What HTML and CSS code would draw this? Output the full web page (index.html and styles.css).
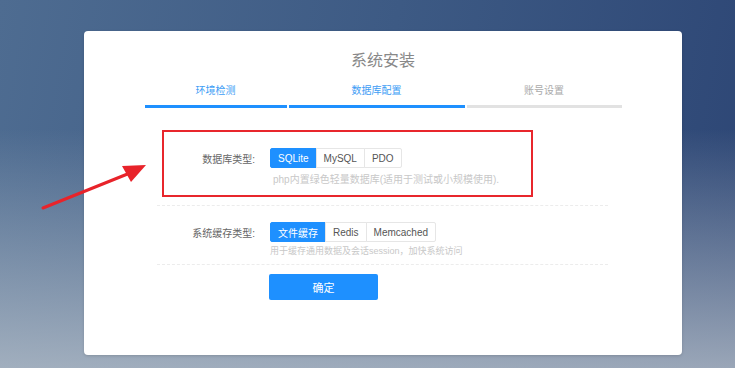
FILE: index.html
```html
<!DOCTYPE html>
<html>
<head>
    <meta charset="UTF-8">
    <title>系统安装</title>
    <link rel="stylesheet" href="styles.css">
</head>
<body>
    <!-- 标注箭头 -->
    <svg class="mark-arrow" width="160" height="60" viewBox="0 0 160 60">
        <line x1="43" y1="53" x2="130" y2="18" stroke="#e8232a" stroke-width="3" stroke-linecap="round"/>
        <polygon points="146,10 122,11 131,27" fill="#e8232a"/>
    </svg>

    <div class="card">
        <h1 class="title">系统安装</h1>

        <!-- 安装步骤 -->
        <div class="steps">
            <div class="step step-1 done">环境检测</div>
            <div class="step step-2 done">数据库配置</div>
            <div class="step step-3">账号设置</div>
        </div>

        <form class="form" onsubmit="return false">
            <div class="row row-db">
                <div class="mark-box"></div>
                <div class="line">
                    <label class="label">数据库类型:</label>
                    <div class="btn-group">
                        <button type="button" class="opt active">SQLite</button>
                        <button type="button" class="opt">MySQL</button>
                        <button type="button" class="opt">PDO</button>
                    </div>
                </div>
                <div class="help help-db">php内置绿色轻量数据库(适用于测试或小规模使用).</div>
            </div>

            <div class="row row-cache">
                <div class="line">
                    <label class="label">系统缓存类型:</label>
                    <div class="btn-group">
                        <button type="button" class="opt active">文件缓存</button>
                        <button type="button" class="opt">Redis</button>
                        <button type="button" class="opt">Memcached</button>
                    </div>
                </div>
                <div class="help help-cache">用于缓存通用数据及会话session，加快系统访问</div>
            </div>

            <div class="actions">
                <button type="submit" class="submit-btn">确定</button>
            </div>
        </form>
    </div>
</body>
</html>
```

FILE: styles.css
```css
/* 页面背景 */
body {
    margin: 0;
    height: 368px;
    overflow: hidden;
    font-family: "Liberation Sans", "Noto Sans CJK SC", sans-serif;
    background:
        linear-gradient(to bottom, rgba(190, 198, 206, 0) 35%, rgba(190, 198, 206, 0.75) 100%),
        linear-gradient(100deg, #4e6c91 0%, #3d5a84 50%, #2d4675 100%);
}

/* 白色卡片 */
.card {
    width: 598px;
    height: 324px;
    margin: 31px 0 0 84px;
    padding-top: 20px;
    box-sizing: border-box;
    background-color: #fff;
    border-radius: 4px;
    box-shadow: 0 1px 3px rgba(0, 0, 0, 0.15);
}

.title {
    margin: 0;
    font-size: 16px;
    line-height: 20px;
    font-weight: normal;
    color: #888;
    text-align: center;
}

/* 步骤条 */
.steps {
    display: flex;
    gap: 2px;
    width: 477px;
    margin: 13px auto 0;
}

.step {
    font-size: 10px;
    line-height: 14px;
    color: #aaa;
    text-align: center;
    padding-bottom: 7px;
    border-bottom: 3px solid #e2e2e2;
}

.step.done {
    color: #3d9df5;
    border-bottom-color: #1e90ff;
}

.step-1 { width: 142px; }
.step-2 { width: 176px; }
.step-3 { width: 155px; }

/* 表单 */
.form {
    margin: 24px 74px 0 73px;
}

.row {
    position: relative;
    padding-top: 16px;
    border-bottom: 1px dashed #ececec;
}

.row-db { padding-bottom: 18px; }
.row-cache { padding-bottom: 6px; }

.line {
    display: flex;
    align-items: center;
    gap: 15px;
}

.label {
    width: 98px;
    text-align: right;
    font-size: 10px;
    color: #666;
}

.btn-group {
    display: flex;
}

.opt {
    height: 20px;
    padding: 0 7px;
    margin: 0 -1px 0 0;
    font-family: "Liberation Sans", "Noto Sans CJK SC", sans-serif;
    font-size: 10px;
    color: #555;
    background-color: #fff;
    border: 1px solid #e6e6e6;
    cursor: pointer;
}

.opt:first-child { border-radius: 2px 0 0 2px; }
.opt:last-child { border-radius: 0 2px 2px 0; }

.opt.active {
    color: #fff;
    background-color: #1e90ff;
    border-color: #1e90ff;
}

.help {
    margin-left: 113px;
    line-height: 14px;
    color: #c8c8c8;
}

.help-db {
    margin-top: 5px;
    margin-left: 116px;
    font-size: 10px;
}

.help-cache {
    margin-top: 2px;
    font-size: 9px;
}

/* 确定按钮 */
.actions {
    padding: 9px 0 0 112px;
}

.submit-btn {
    width: 109px;
    height: 26px;
    font-family: "Liberation Sans", "Noto Sans CJK SC", sans-serif;
    font-size: 11px;
    color: #fff;
    background-color: #1e90ff;
    border: none;
    border-radius: 2px;
    cursor: pointer;
}

/* 标注: 红框和箭头 */
.mark-box {
    position: absolute;
    left: 5px;
    top: -2px;
    width: 371px;
    height: 67px;
    box-sizing: border-box;
    border: 2px solid #e8262c;
    pointer-events: none;
}

.mark-arrow {
    position: absolute;
    left: 0;
    top: 155px;
}
```
